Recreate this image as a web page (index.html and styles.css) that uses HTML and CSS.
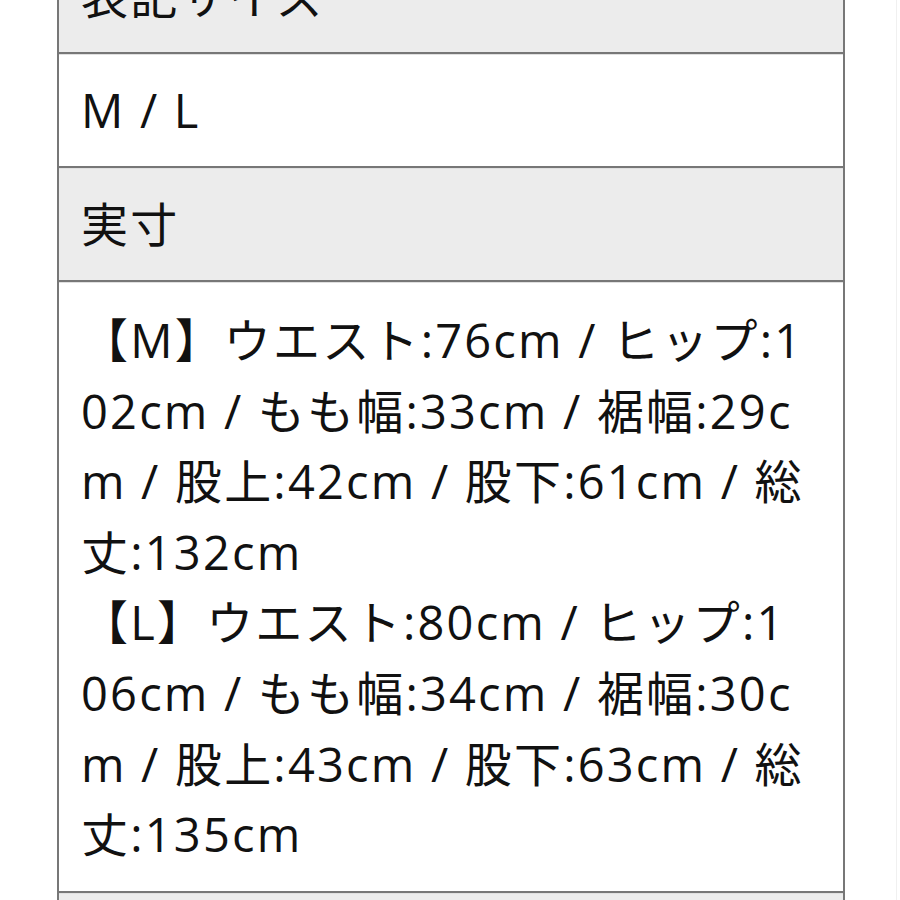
FILE: index.html
```html
<!DOCTYPE html>
<html lang="ja">
<head>
<meta charset="utf-8">
<link rel="stylesheet" href="styles.css">
</head>
<body>
<div class="page">
  <div class="table">
    <div class="row head">表記サイズ</div>
    <div class="row">M / L</div>
    <div class="row head">実寸</div>
    <div class="row body">【M】ウエスト:76cm / ヒップ:1<br>02cm / もも幅:33cm / 裾幅:29c<br>m / 股上:42cm / 股下:61cm / 総<br>丈:132cm<br>【L】ウエスト:80cm / ヒップ:1<br>06cm / もも幅:34cm / 裾幅:30c<br>m / 股上:43cm / 股下:63cm / 総<br>丈:135cm</div>
    <div class="row head">&nbsp;</div>
  </div>
</div>
</body>
</html>
```
FILE: styles.css
```css
html, body {
  margin: 0;
  padding: 0;
  background: #fff;
  overflow: hidden;
}
.page {
  height: 900px;
  overflow: hidden;
  border-right: 1px solid #f0f0f0;
  width: 896px;
}
.table {
  margin-top: -62px;
  margin-left: 57px;
  width: 784px;
  border-left: 2px solid #777;
  border-right: 2px solid #777;
  font-family: "Open Sans", "Noto Sans CJK JP", sans-serif;
  font-size: 47px;
  letter-spacing: 2.2px;
  color: #111;
}
.row {
  border-top: 2px solid #777;
  padding: 21px 20px 21px 22px;
  line-height: 70px;
  box-shadow: inset 0 1px 0 #e0e0e0;
  white-space: nowrap;
}
.head {
  background: #ececec;
}
.body {
  padding-top: 23px;
  line-height: 70.6px;
}
```
